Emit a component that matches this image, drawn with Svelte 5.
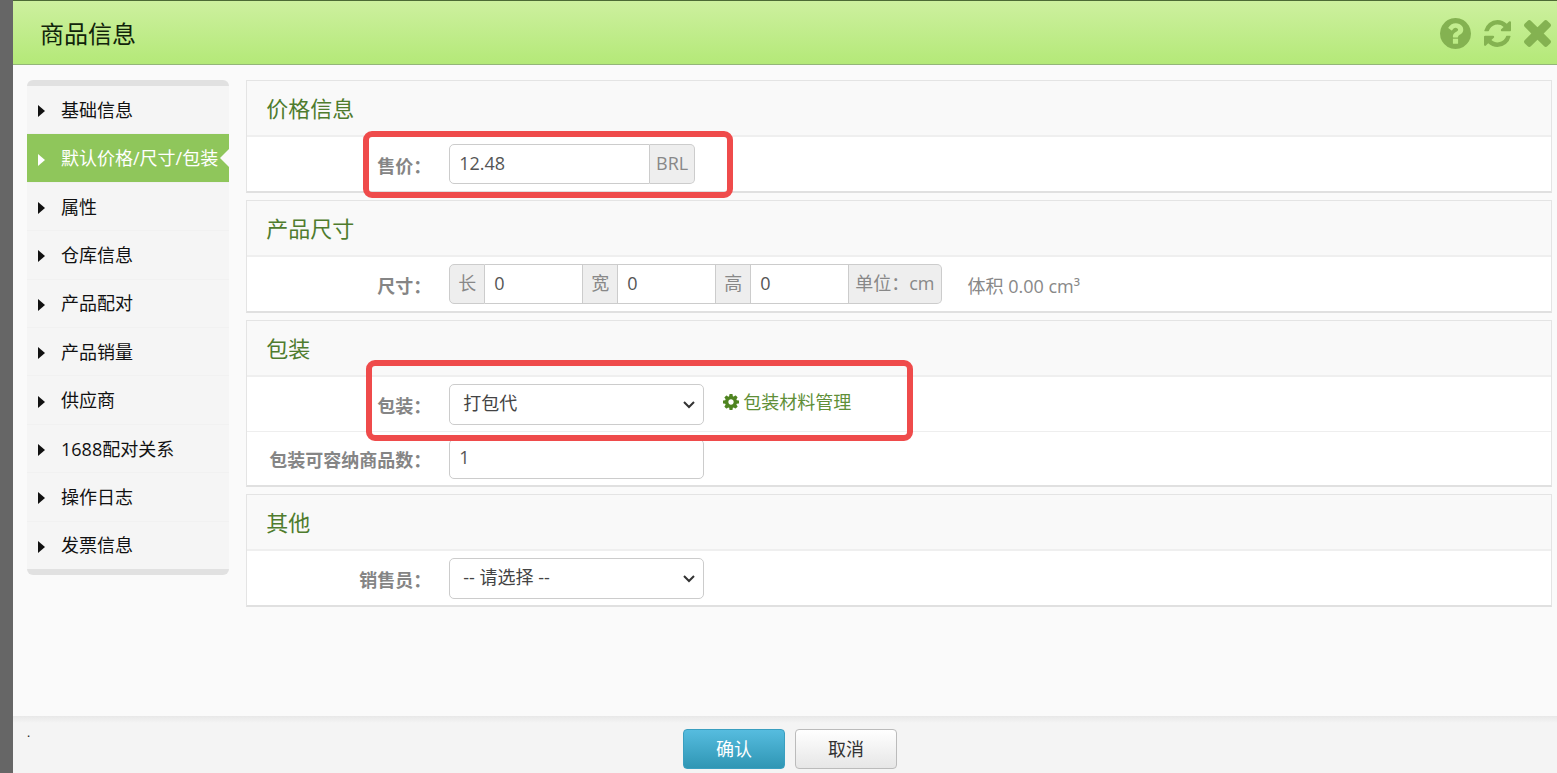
<script>
    const menu = [
        "基础信息",
        "默认价格/尺寸/包装",
        "属性",
        "仓库信息",
        "产品配对",
        "产品销量",
        "供应商",
        "1688配对关系",
        "操作日志",
        "发票信息",
    ];

    let active = $state(1);
    let price = $state("12.48");
    let length = $state("0");
    let width = $state("0");
    let height = $state("0");
    let packing = $state("打包代");
    let capacity = $state("1");
    let seller = $state("");

    let volume = $derived((Number(length) * Number(width) * Number(height) || 0).toFixed(2));
</script>

<div class="dialog">
    <header>
        <h1>商品信息</h1>
        <div class="tools">
            <button type="button" class="help" aria-label="帮助">
                <svg viewBox="0 128 1536 1536"><path d="M896 1376v-192q0-14-9-23t-23-9h-192q-14 0-23 9t-9 23v192q0 14 9 23t23 9h192q14 0 23-9t9-23zm256-672q0-88-55.5-163t-138.5-116-170-41q-243 0-371 213-15 24 8 42l132 100q7 6 19 6 16 0 25-12 53-68 86-92 34-24 86-24 48 0 85.5 26t37.5 59q0 38-20 61t-68 45q-63 28-115.5 86.5t-52.5 125.5v36q0 14 9 23t23 9h192q14 0 23-9t9-23q0-19 21.5-49.5t54.5-49.5q32-18 49-28.5t46-35 44.5-48 28-60.5 12.5-81zm384 192q0 209-103 385.5t-279.5 279.5-385.5 103-385.5-103-279.5-279.5-103-385.5 103-385.5 279.5-279.5 385.5-103 385.5 103 279.5 279.5 103 385.5z" /></svg>
            </button>
            <button type="button" aria-label="刷新">
                <svg viewBox="128 128 1536 1536"><path d="M1639 1056q0 5-1 7-64 268-268 434.5t-478 166.5q-146 0-282.5-55t-243.5-157l-129 129q-19 19-45 19t-45-19-19-45v-448q0-26 19-45t45-19h448q26 0 45 19t19 45-19 45l-137 137q71 66 161 102t187 36q134 0 250-65t186-179q11-17 53-117 8-23 30-23h192q13 0 22.5 9.5t9.5 22.5zm25-800v448q0 26-19 45t-45 19h-448q-26 0-45-19t-19-45 19-45l138-138q-148-137-349-137-134 0-250 65t-186 179q-11 17-53 117-8 23-30 23h-199q-13 0-22.5-9.5t-9.5-22.5v-7q65-268 270-434.5t480-166.5q146 0 284 55.5t245 156.5l130-129q19-19 45-19t45 19 19 45z" /></svg>
            </button>
            <button type="button" aria-label="关闭">
                <svg viewBox="302 366 1188 1188"><path d="M1490 1322q0 40-28 68l-136 136q-28 28-68 28t-68-28l-294-294-294 294q-28 28-68 28t-68-28l-136-136q-28-28-28-68t28-68l294-294-294-294q-28-28-28-68t28-68l136-136q28-28 68-28t68 28l294 294 294-294q28-28 68-28t68 28l136 136q28 28 28 68t-28 68l-294 294 294 294q28 28 28 68z" /></svg>
            </button>
        </div>
    </header>

    <div class="content">
        <nav>
            {#each menu as item, i}
                <button type="button" class:active={i === active} onclick={() => (active = i)}>
                    <svg class="caret" viewBox="0 0 7 12"><path d="M0 0L7 6L0 12Z" /></svg>
                    <span>{item}</span>
                </button>
            {/each}
        </nav>

        <main>
            <section>
                <h2>价格信息</h2>
                <div class="row">
                    <label for="price">售价：</label>
                    <div class="group price">
                        <input id="price" type="text" bind:value={price} />
                        <span class="addon">BRL</span>
                    </div>
                    <div class="mark mark-price"></div>
                </div>
            </section>

            <section>
                <h2>产品尺寸</h2>
                <div class="row">
                    <label for="length">尺寸：</label>
                    <div class="group size">
                        <label class="addon" for="length">长</label>
                        <input id="length" type="text" bind:value={length} />
                        <label class="addon" for="width">宽</label>
                        <input id="width" type="text" bind:value={width} />
                        <label class="addon" for="height">高</label>
                        <input id="height" type="text" bind:value={height} />
                        <span class="addon">单位：cm</span>
                    </div>
                    <span class="volume">体积 {volume} cm³</span>
                </div>
            </section>

            <section>
                <h2>包装</h2>
                <div class="row">
                    <label for="packing">包装：</label>
                    <div class="select">
                        <select id="packing" bind:value={packing}>
                            <option value="打包代">打包代</option>
                        </select>
                        <svg viewBox="0 0 12 8"><path d="M1 1L6 6L11 1" /></svg>
                    </div>
                    <a href="#packing">
                        <svg viewBox="128 128 1536 1536"><path d="M1152 896q0-106-75-181t-181-75-181 75-75 181 75 181 181 75 181-75 75-181zm512-109v222q0 12-8 23t-20 13l-185 28q-19 54-39 91 35 50 107 138 10 12 10 25t-9 23q-27 37-99 108t-94 71q-12 0-26-9l-138-108q-44 23-91 38-16 136-29 186-7 28-36 28h-222q-14 0-24.5-8.5t-11.5-21.5l-28-184q-49-16-90-37l-141 107q-10 9-25 9-14 0-25-11-126-114-165-168-7-10-7-23 0-12 8-23 15-21 51-66.5t54-70.5q-27-50-41-99l-183-27q-13-2-21-12.5t-8-23.5v-222q0-12 8-23t19-13l186-28q14-46 39-92-40-57-107-138-10-12-10-24 0-10 9-23 26-36 98.5-107.5t94.5-71.5q13 0 26 10l138 107q44-23 91-38 16-136 29-186 7-28 36-28h222q14 0 24.5 8.5t11.5 21.5l28 184q49 16 90 37l142-107q9-9 24-9 13 0 25 10 129 119 165 170 7 8 7 22 0 12-8 23-15 21-51 66.5t-54 70.5q26 50 41 98l183 28q13 2 21 12.5t8 23.5z" /></svg>
                        包装材料管理
                    </a>
                    <div class="mark mark-packing"></div>
                </div>
                <div class="row">
                    <label for="capacity">包装可容纳商品数：</label>
                    <input id="capacity" class="wide" type="text" bind:value={capacity} />
                </div>
            </section>

            <section>
                <h2>其他</h2>
                <div class="row">
                    <label for="seller">销售员：</label>
                    <div class="select">
                        <select id="seller" bind:value={seller}>
                            <option value="">-- 请选择 --</option>
                        </select>
                        <svg viewBox="0 0 12 8"><path d="M1 1L6 6L11 1" /></svg>
                    </div>
                </div>
            </section>
        </main>
    </div>

    <footer>
        <span class="dot">.</span>
        <div class="actions">
            <button type="button" class="primary">确认</button>
            <button type="button">取消</button>
        </div>
    </footer>
</div>

<style>
    :global(body) {
        margin: 0;
        background: #666;
    }

    * {
        box-sizing: border-box;
    }

    .dialog {
        display: flex;
        flex-direction: column;
        min-height: 100vh;
        margin-left: 13px;
        background: #fafafa;
        color: #111;
        font-family: "Open Sans", "Noto Sans CJK SC", sans-serif;
        font-size: 18px;
        line-height: 24px;
    }

    button,
    input,
    select {
        font: inherit;
        color: inherit;
    }

    header {
        display: flex;
        align-items: center;
        justify-content: space-between;
        height: 65px;
        padding: 2px 6px 0 27px;
        border-top: 1px solid #4c6a35;
        border-bottom: 1px solid #93b678;
        background: linear-gradient(#cdf09f, #b4e978);
    }

    h1 {
        margin: 0;
        color: #10240a;
        font-size: 24px;
        font-weight: 400;
        line-height: 32px;
    }

    .tools {
        display: flex;
        align-items: center;
        gap: 13px;
    }

    .tools button {
        display: flex;
        width: 27px;
        padding: 0;
        border: 0;
        background: none;
        cursor: pointer;
    }

    .tools .help {
        width: 31px;
    }

    .tools svg {
        width: 100%;
        fill: #84b251;
    }

    .content {
        display: flex;
        flex: 1;
        align-items: flex-start;
        gap: 17px;
        padding: 15px 5px 20px 14px;
    }

    nav {
        display: flex;
        flex: 0 0 202px;
        flex-direction: column;
        min-height: 495px;
        border-top: 6px solid #e1e1e1;
        border-bottom: 6px solid #e1e1e1;
        border-radius: 6px;
        background: #f5f5f5;
    }

    nav button {
        position: relative;
        display: flex;
        flex: 1;
        align-items: center;
        gap: 16px;
        padding: 0 11px;
        border: 0;
        border-bottom: 1px solid #f1f1f1;
        background: none;
        white-space: nowrap;
        cursor: pointer;
    }

    nav button:last-child {
        border-bottom: 0;
    }

    .caret {
        width: 7px;
        height: 12px;
        margin-top: 3px;
        fill: currentColor;
    }

    nav .active {
        background: #8fc65b;
        color: #fff;
    }

    /* notch on the right edge of the current item */
    nav .active::after {
        content: "";
        position: absolute;
        top: 50%;
        right: 0;
        margin-top: -9px;
        border: 9px solid transparent;
        border-left-width: 0;
        border-right-color: #fafafa;
    }

    main {
        display: flex;
        flex: 1;
        flex-direction: column;
        gap: 7px;
    }

    section {
        border: 1px solid #e4e4e4;
        border-bottom: 2px solid #e0e0e0;
        background: #fff;
    }

    h2 {
        margin: 0;
        padding: 12px 19px;
        border-bottom: 2px solid #efefef;
        background: #f9f9f9;
        color: #4f7c2e;
        font-size: 22px;
        font-weight: 400;
        line-height: 30px;
    }

    .row {
        position: relative;
        display: flex;
        align-items: center;
        min-height: 54px;
    }

    .row + .row {
        border-top: 1px solid #eee;
    }

    .row > label {
        width: 184px;
        margin-right: 18px;
        padding-top: 3px;
        color: #858585;
        font-weight: 700;
        text-align: right;
        white-space: nowrap;
    }

    input {
        width: 100px;
        height: 40px;
        padding: 0 9px 3px;
        border: 1px solid #ccc;
        outline: 0;
        background: #fff;
        color: #555;
    }

    .wide {
        width: 255px;
        border-radius: 5px;
    }

    .group {
        display: flex;
        color: #888;
    }

    .group input {
        min-width: 0;
    }

    .price {
        width: 246px;
    }

    .price input {
        flex: 1;
        border-radius: 5px 0 0 5px;
    }

    .addon {
        display: flex;
        align-items: center;
        padding: 0 6px 2px;
        border: 1px solid #ccc;
        background: #eee;
        white-space: nowrap;
    }

    .addon + input,
    input + .addon {
        border-left: 0;
    }

    .addon:first-child {
        padding: 0 8px 2px;
        border-radius: 5px 0 0 5px;
    }

    .addon:last-child {
        border-radius: 0 5px 5px 0;
    }

    .size input {
        width: 98px;
    }

    .addon:not(:first-child):not(:last-child) {
        padding: 0 8px 2px;
    }

    .volume {
        margin-left: 26px;
        padding-top: 4px;
        color: #888;
    }

    .select {
        position: relative;
        width: 255px;
    }

    select {
        width: 100%;
        height: 41px;
        padding: 0 32px 2px 13px;
        border: 1px solid #ccc;
        border-radius: 5px;
        outline: 0;
        appearance: none;
        background: #fff;
        color: #444;
    }

    .select svg {
        position: absolute;
        top: 17px;
        right: 9px;
        width: 12px;
        height: 8px;
        fill: none;
        stroke: #333;
        stroke-width: 2;
        pointer-events: none;
    }

    a {
        display: flex;
        align-items: center;
        gap: 4px;
        margin-left: 19px;
        padding-bottom: 5px;
        color: #5f8f38;
        text-decoration: none;
    }

    a svg {
        width: 16px;
        height: 16px;
        fill: #4f8420;
    }

    .mark {
        position: absolute;
        z-index: 1;
        border: 6px solid #ef4b4b;
        border-radius: 9px;
        pointer-events: none;
    }

    .mark-price {
        top: -6px;
        left: 116px;
        width: 370px;
        height: 67px;
    }

    .mark-packing {
        top: -17px;
        left: 119px;
        width: 547px;
        height: 81px;
    }

    footer {
        display: grid;
        grid-template-columns: 1fr auto 1fr;
        padding: 13px 4px 4px 14px;
        background: linear-gradient(#e8e8e8, #f4f4f4 7px);
    }

    .dot {
        font-size: 12px;
        line-height: 8px;
    }

    .actions {
        display: flex;
        gap: 10px;
    }

    .actions button {
        width: 102px;
        height: 40px;
        padding: 0;
        border: 1px solid #bbb;
        border-radius: 4px;
        background: linear-gradient(#fff, #e6e6e6);
        color: #333;
        cursor: pointer;
    }

    .actions .primary {
        border-color: #3a9fc0;
        background: linear-gradient(#56bcdf, #2f96b4);
        color: #fff;
    }
</style>
